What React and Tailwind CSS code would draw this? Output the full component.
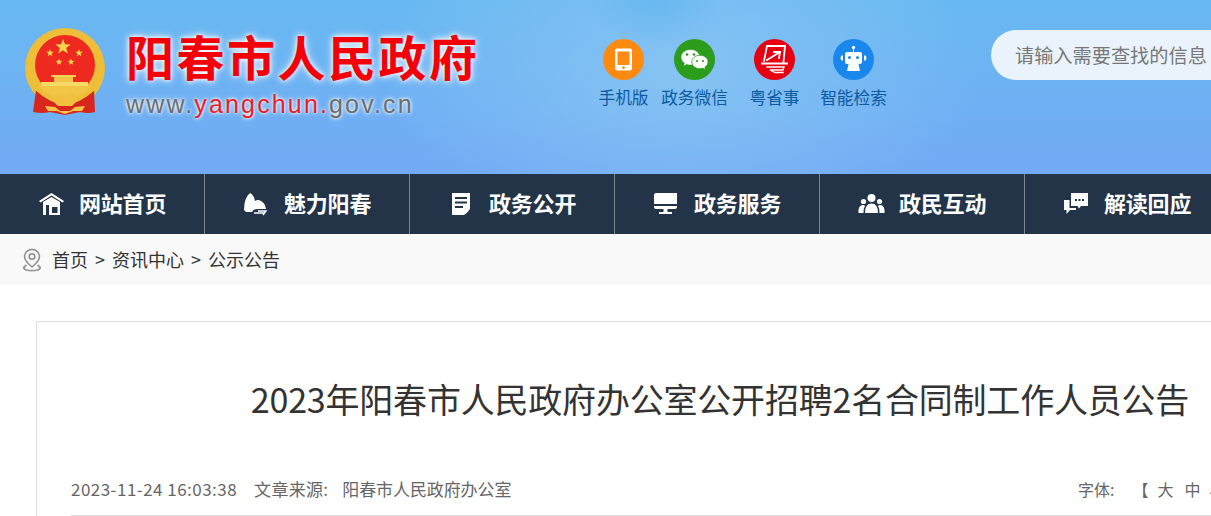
const FONT = "font-['Noto_Sans_CJK_SC','Noto_Sans',sans-serif]";

const Star = ({ cx, cy, r, fill = "#f6d54a" }) => {
  const pts = [];
  for (let i = 0; i < 10; i++) {
    const rad = i % 2 === 0 ? r : r * 0.42;
    const a = (Math.PI / 5) * i - Math.PI / 2;
    pts.push(`${cx + rad * Math.cos(a)},${cy + rad * Math.sin(a)}`);
  }
  return <polygon points={pts.join(" ")} fill={fill} />;
};

const Emblem = () => (
  <svg width="82" height="90" viewBox="0 0 82 90" className="shrink-0">
    <circle cx="41" cy="40" r="40" fill="#efbe38" />
    <circle cx="41" cy="37" r="30" fill="#ee2a20" />
    <path d="M12 62 L9 84 Q18 86 26 84 L41 87 L56 84 Q64 86 71 84 L70 62 Q56 75 41 75 Q26 75 12 62 Z" fill="#d8261c" />
    <Star cx={39} cy={19} r={8} />
    <Star cx={26} cy={25} r={4} />
    <Star cx={55} cy={25} r={4} />
    <Star cx={35} cy={34} r={3.5} />
    <Star cx={47} cy={34} r={3.5} />
    <rect x="27" y="47" width="25" height="2" fill="#f4cf58" />
    <rect x="30" y="49" width="19" height="5" fill="#f2c246" />
    <rect x="17" y="54" width="47" height="4" fill="#f8d966" />
    <path d="M14 58 H68 Q56 71 41 71 Q26 71 14 58 Z" fill="#f3c544" />
    <path d="M12 61 Q27 75 41 75 Q55 75 70 61" fill="none" stroke="#efbe38" strokeWidth="2.500" />
    <path d="M28 72 Q34 62 41 67 Q48 62 54 72 L48 78 H34 Z" fill="#f0c040" />
    <path d="M21 78 L31 79 L36 83 H46 L51 79 L61 78 L58 83 H49 L41 86 L33 83 H24 Z" fill="#f3c544" />
  </svg>
);

const PhoneIcon = () => (
  <svg width="41" height="41" viewBox="0 0 41 41">
    <circle cx="20.5" cy="20.5" r="20.5" fill="#ff8a12" />
    <path fillRule="evenodd" d="M14 9.500h13a2 2 0 0 1 2 2v18a2 2 0 0 1-2 2H14a2 2 0 0 1-2-2v-18a2 2 0 0 1 2-2Zm.5 3v13.500h12V12.500Z" fill="#fff" />
    <circle cx="20.500" cy="28.700" r="1.400" fill="#ff8a12" />
  </svg>
);

const WechatIcon = () => (
  <svg width="41" height="41" viewBox="0 0 41 41">
    <circle cx="20.5" cy="20.5" r="20.5" fill="#2c9c1c" />
    <path d="M16.500 10.500c-5.500 0-9.500 3.500-9.500 7.800 0 2.500 1.300 4.500 3.400 6l-.9 2.900 3.200-1.700c1.200.4 2.500.6 3.800.6 5.500 0 9.500-3.500 9.500-7.800s-4-7.800-9.500-7.800Z" fill="#fff" stroke="#2c9c1c" strokeWidth="0.6" />
    <path d="M26 16.300c-4.700 0-8.200 3-8.200 6.700s3.500 6.700 8.200 6.700c1 0 2-.2 2.900-.5l2.700 1.500-.7-2.500c1.900-1.200 3.100-3.100 3.100-5.200 0-3.700-3.400-6.700-8-6.700Z" fill="#fff" stroke="#2c9c1c" strokeWidth="0.8" />
    <circle cx="13" cy="15.500" r="1.300" fill="#2c9c1c" />
    <circle cx="20" cy="15.500" r="1.300" fill="#2c9c1c" />
    <circle cx="23" cy="22" r="1.100" fill="#2c9c1c" />
    <circle cx="29" cy="22" r="1.100" fill="#2c9c1c" />
  </svg>
);

const YueIcon = () => (
  <svg width="41" height="41" viewBox="0 0 41 41">
    <circle cx="20.5" cy="20.5" r="20.500" fill="#e60012" />
    <g fill="none" stroke="#fff" strokeLinecap="square">
      <path d="M13 7h18M31 7l-1.500 16M13 7l-3 15" strokeWidth="1.800" />
      <path d="M13 21l13-8M26 13h-6M26 13l-1 6" strokeWidth="1.800" />
      <path d="M8 24.500h25" strokeWidth="2" />
      <path d="M13 28h17l-1 3H16l5 2.500h8" strokeWidth="1.300" />
    </g>
  </svg>
);

const RobotIcon = () => (
  <svg width="41" height="41" viewBox="0 0 41 41">
    <circle cx="20.5" cy="20.5" r="20.5" fill="#1a87ec" />
    <circle cx="20.500" cy="8.500" r="1.700" fill="#fff" />
    <rect x="20" y="9" width="1" height="4" fill="#fff" />
    <rect x="12" y="13" width="17" height="12" rx="2" fill="#fff" />
    <circle cx="16.500" cy="18.500" r="1.500" fill="#1a87ec" />
    <circle cx="24.500" cy="18.500" r="1.500" fill="#1a87ec" />
    <path d="M8.500 16.500 Q6.500 19 8.500 21.500 L10 21.500 V16.500 Z M32.500 16.500 Q34.500 19 32.500 21.500 L31 21.500 V16.500 Z" fill="#fff" />
    <path d="M15.500 25h10l1.500 7H14Z" fill="#fff" />
  </svg>
);

const HomeIcon = () => (
  <svg width="27" height="24" viewBox="0 0 27 24">
    <path d="M13.500 1 L26 9 L24.500 10.500 L13.500 3.500 L2.500 10.500 L1 9 Z" fill="#fff" />
    <path fillRule="evenodd" d="M5 10 L13.500 5 L22 10 V23 H5 Z M8 13 V23 H11 V13 Z M14 15 V21 H19.500 V15 Z" fill="#fff" />
  </svg>
);

const ScenicIcon = () => (
  <svg width="27" height="24" viewBox="0 0 27 24">
    <path d="M1 18 Q1 6 7 1 Q11 3 12 9 Q15 7 18 9 Q22 11 23 17 L14 17 Q10 17 9 20 L3 20 Z" fill="#fff" />
    <path d="M11 21 H22 M15 19 H23 L20 23" stroke="#fff" strokeWidth="1.400" fill="none" />
  </svg>
);

const DocIcon = () => (
  <svg width="27" height="24" viewBox="0 0 27 24">
    <path fillRule="evenodd" d="M4 1 H22 V17 L16 23 H4 Z M7 5 V7 H19 V5 Z M7 9.500 V11.500 H19 V9.500 Z M7 14 V16 H15 V14 Z" fill="#fff" />
    <path d="M17 18.500 H21 L17 22.500 Z" fill="#fff" />
  </svg>
);

const MonitorIcon = () => (
  <svg width="27" height="24" viewBox="0 0 27 24">
    <path d="M3 1 H24 V12 H1 V3 Q1 1 3 1 Z" fill="#fff" />
    <path d="M1 14 H24 V15 Q24 17 22 17 H3 Q1 17 1 15 Z" fill="#fff" />
    <rect x="10.500" y="17" width="4" height="3" fill="#fff" />
    <rect x="6" y="20" width="13" height="2" fill="#fff" />
  </svg>
);

const UsersIcon = () => (
  <svg width="27" height="24" viewBox="0 0 27 24">
    <circle cx="13.500" cy="6" r="4" fill="#fff" />
    <circle cx="5.500" cy="9.500" r="2.600" fill="#fff" />
    <circle cx="21.500" cy="9.500" r="2.600" fill="#fff" />
    <path d="M7 21 Q7 11.500 13.500 11.500 Q20 11.500 20 21 Z" fill="#fff" />
    <path d="M0.500 21 Q0 13 5 13 Q6.500 13 7 14 Q5 17 5.500 21 Z M26.500 21 Q27 13 22 13 Q20.500 13 20 14 Q22 17 21.500 21 Z" fill="#fff" />
  </svg>
);

const ChatIcon = () => (
  <svg width="27" height="24" viewBox="0 0 27 24">
    <path fillRule="evenodd" d="M8 1 H25 V14 H18 L16 16.500 L14.500 14 H8 Z M12 7 V9 H14 V7 Z M15.500 7 V9 H17.500 V7 Z M19 7 V9 H21 V7 Z" fill="#fff" />
    <path d="M1 8 H6.500 V16 H13 V18 H7 L3.500 22 V18 H1 Z" fill="#fff" />
  </svg>
);

const PinIcon = () => (
  <svg width="20" height="24" viewBox="0 0 20 24" className="shrink-0">
    <path d="M10 1.500 C5.300 1.500 2.500 5 2.500 8.700 C2.500 12.500 6.500 16 10 19 C13.500 16 17.500 12.500 17.500 8.700 C17.500 5 14.700 1.500 10 1.500 Z" fill="none" stroke="#8d8d8d" strokeWidth="1.500" />
    <circle cx="10" cy="8.500" r="2.800" fill="none" stroke="#8d8d8d" strokeWidth="1.500" />
    <path d="M4 16.500 Q0.500 18 1 20.500 Q2 23.500 10 23.500 Q18 23.500 19 20.500 Q19.500 18 16 16.500 L14.500 17.500 Q17 18.500 17 20 Q16 21.800 10 21.800 Q4 21.800 3 20 Q3 18.500 5.500 17.500 Z" fill="#9a9a9a" />
  </svg>
);

const quickLinks = [
  { label: "手机版", icon: <PhoneIcon />, width: "w-[71px]" },
  { label: "政务微信", icon: <WechatIcon />, width: "w-[71px]" },
  { label: "粤省事", icon: <YueIcon />, width: "w-[89px]" },
  { label: "智能检索", icon: <RobotIcon />, width: "w-[69px]" },
];

const navItems = [
  { label: "网站首页", icon: <HomeIcon /> },
  { label: "魅力阳春", icon: <ScenicIcon /> },
  { label: "政务公开", icon: <DocIcon /> },
  { label: "政务服务", icon: <MonitorIcon /> },
  { label: "政民互动", icon: <UsersIcon /> },
  { label: "解读回应", icon: <ChatIcon /> },
];

export default function App() {
  return (
    <div className={`w-[1211px] h-[516px] overflow-hidden bg-white ${FONT}`}>
      <div className="w-[1440px]">
        <header className="h-[174px] flex items-start bg-[radial-gradient(ellipse_70px_45px_at_655px_0px,#68b8f0,transparent),radial-gradient(ellipse_300px_170px_at_680px_70px,#86c3f3,transparent),linear-gradient(180deg,#68b9f1,#73aaf5)]">
          <div className="mt-[28px] ml-[24px]">
            <Emblem />
          </div>
          <div className="ml-[20px] mt-[24px] w-[400px]">
            <div className="text-[48px] leading-[62px] font-bold tracking-[2.500px] text-[#f40009] [text-shadow:0_0_4px_#fff,0_0_8px_#fff]">
              阳春市人民政府
            </div>
            <div className="font-['Liberation_Sans',sans-serif] text-[25px] leading-[30px] mt-[3px] tracking-[2.150px] text-[#6d6d6d] [text-shadow:0_0_3px_#fff,0_0_5px_#fff]">
              www.<span className="text-[#ee1c25]">yangchun.</span>gov.cn
            </div>
          </div>
          <div className="ml-[62px] mt-[39px] flex">
            {quickLinks.map((item) => (
              <div key={item.label} className={`${item.width} flex flex-col items-center`}>
                {item.icon}
                <span className="mt-[4px] text-[16.700px] leading-[26px] whitespace-nowrap text-[#0e5a9f]">
                  {item.label}
                </span>
              </div>
            ))}
          </div>
          <div className="ml-[103px] mt-[30px] w-[449px] h-[50px] rounded-l-[25px] bg-[#eaf3fb] pl-[24px] flex items-center text-[19.200px] text-[#777]">
            请输入需要查找的信息
          </div>
        </header>

        <nav className="h-[60px] flex bg-[#233449]">
          {navItems.map((item) => (
            <div
              key={item.label}
              className="w-[205px] shrink-0 pl-[38px] flex items-center gap-[14px] border-r border-[#7c8794] last:border-r-0"
            >
              {item.icon}
              <span className="pb-[4px] text-[22px] font-bold tracking-[-0.200px] text-white whitespace-nowrap">{item.label}</span>
            </div>
          ))}
        </nav>

        <div className="h-[51px] bg-[#f9f9f9] pl-[22px] flex items-center text-[18px] text-[#333]">
          <PinIcon />
          <div className="ml-[10px] flex gap-[7px]">
            <span>首页</span>
            <span>&gt;</span>
            <span>资讯中心</span>
            <span>&gt;</span>
            <span>公示公告</span>
          </div>
        </div>

        <main className="mt-[36px] ml-[36px] w-[1368px] border border-[#ddd] px-[34px]">
          <h1 className="pt-[54px] text-center text-[34px] leading-[46px] tracking-[-0.200px] text-[#333]">
            2023年阳春市人民政府办公室公开招聘2名合同制工作人员公告
          </h1>
          <div className="mt-[51px] h-[43px] pb-[10px] flex items-center justify-between border-b border-[#ddd] text-[17px] text-[#666]">
            <div className="flex">
              <span className="tracking-[0.470px]">2023-11-24 16:03:38</span>
              <span className="ml-[17px] tracking-[0.300px]">文章来源:</span>
              <span className="ml-[14px] tracking-[-0.100px]">阳春市人民政府办公室</span>
            </div>
            <div className="w-[291px] flex text-[16px]">
              <span>字体:</span>
              <span className="ml-[18px]">【</span>
              <span className="ml-[9px]">大</span>
              <span className="ml-[11px]">中</span>
              <span className="ml-[9px]">小</span>
              <span className="ml-[2px]">】</span>
            </div>
          </div>
        </main>
      </div>
    </div>
  );
}
